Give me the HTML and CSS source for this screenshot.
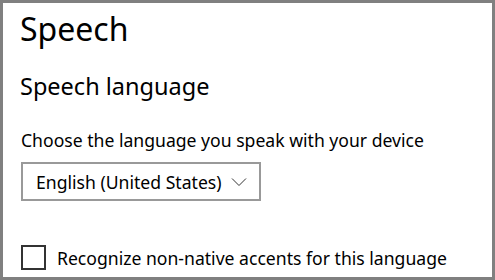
FILE: index.html
```html
<!DOCTYPE html>
<html lang="en">
<head>
  <meta charset="UTF-8">
  <title>Speech</title>
  <link rel="stylesheet" href="styles.css">
</head>
<body>
  <div class="frame">
    <h1 class="title">Speech</h1>
    <h2 class="subtitle">Speech language</h2>
    <p class="hint">Choose the language you speak with your device</p>
    <div class="select">
      <span>English (United States)</span>
      <svg class="chevron" width="16" height="10" viewBox="0 0 16 10">
        <path d="M1 1.5 L8 8.5 L15 1.5" fill="none" stroke="#333" stroke-width="1"/>
      </svg>
    </div>
    <label class="check">
      <span class="box"></span>
      <span>Recognize non-native accents for this language</span>
    </label>
  </div>
</body>
</html>
```

FILE: styles.css
```css
html, body {
  margin: 0;
  padding: 0;
}

body {
  font-family: "Noto Sans", "Open Sans", sans-serif;
  color: #000;
  background: #fff;
}

.frame {
  box-sizing: border-box;
  width: 495px;
  height: 280px;
  border: 3px solid #808080;
  padding: 0 0 0 17px;
  display: flex;
  flex-direction: column;
}

.title {
  margin: 4px 0 0 0;
  font-size: 32px;
  font-weight: normal;
  line-height: 44px;
}

.subtitle {
  margin: 20px 0 0 0;
  font-size: 23.5px;
  font-weight: normal;
  line-height: 30px;
}

.hint {
  margin: 27px 0 0 1px;
  font-size: 17.6px;
  line-height: 24px;
}

.select {
  box-sizing: border-box;
  width: 240px;
  height: 39px;
  margin: 10px 0 0 1px;
  border: 2px solid #999;
  display: flex;
  align-items: center;
  justify-content: space-between;
  padding: 0 12px 0 13px;
  font-size: 17.6px;
}

.check {
  display: flex;
  align-items: center;
  gap: 11px;
  margin: 44px 0 0 1px;
  font-size: 17.6px;
}

.box {
  box-sizing: border-box;
  width: 25px;
  height: 25px;
  border: 2px solid #333;
}
```
